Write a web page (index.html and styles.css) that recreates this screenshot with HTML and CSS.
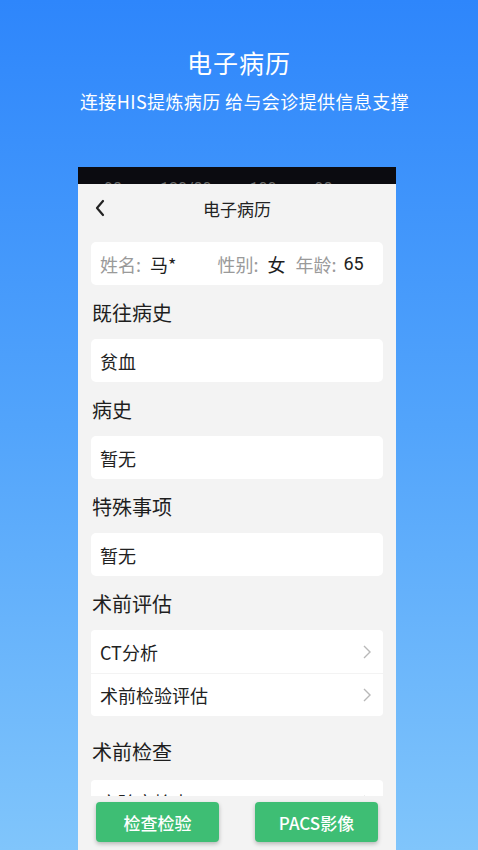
FILE: index.html
```html
<!DOCTYPE html>
<html lang="zh">
<head>
<meta charset="utf-8">
<title>电子病历</title>
<link rel="stylesheet" href="styles.css">
</head>
<body>
<div class="hero">
  <h1 class="hero-title">电子病历</h1>
  <p class="hero-sub">连接HIS提炼病历 给与会诊提供信息支撑</p>
</div>
<div class="phone">
  <div class="statusbar"><span>98</span><span>120/80</span><span>100</span><span>98</span></div>
  <div class="header">
    <svg class="back" width="12" height="18" viewBox="0 0 12 18"><path d="M9 2 L3 9 L9 16" fill="none" stroke="#222" stroke-width="2.2" stroke-linecap="round" stroke-linejoin="round"/></svg>
    <div class="header-title">电子病历</div>
  </div>
  <div class="content">
    <div class="card info">
      <span class="lbl">姓名:</span><span class="val name">马*</span>
      <span class="lbl">性别:</span><span class="val sex">女</span>
      <span class="lbl">年龄:</span><span class="val age">65</span>
    </div>
    <div class="sec">既往病史</div>
    <div class="card">贫血</div>
    <div class="sec">病史</div>
    <div class="card">暂无</div>
    <div class="sec">特殊事项</div>
    <div class="card">暂无</div>
    <div class="sec">术前评估</div>
    <div class="list">
      <div class="row">CT分析<svg class="chev" width="10" height="16" viewBox="0 0 10 16"><path d="M2 2 L8 8 L2 14" fill="none" stroke="#b8b8b8" stroke-width="1.4"/></svg></div>
      <div class="row">术前检验评估<svg class="chev" width="10" height="16" viewBox="0 0 10 16"><path d="M2 2 L8 8 L2 14" fill="none" stroke="#b8b8b8" stroke-width="1.4"/></svg></div>
    </div>
    <div class="sec sec-gap">术前检查</div>
    <div class="list">
      <div class="row">实验室检查<svg class="chev" width="10" height="16" viewBox="0 0 10 16"><path d="M2 2 L8 8 L2 14" fill="none" stroke="#b8b8b8" stroke-width="1.4"/></svg></div>
    </div>
  </div>
  <div class="bottom">
    <button class="btn">检查检验</button>
    <button class="btn">PACS影像</button>
  </div>
</div>
</body>
</html>
```
FILE: styles.css
```css
* { box-sizing: border-box; }
html, body { margin: 0; padding: 0; }
body {
  width: 478px;
  height: 850px;
  overflow: hidden;
  background: linear-gradient(180deg, #2e86fb 0%, #52a4fb 50%, #80c5fb 100%);
  font-family: "Noto Sans CJK SC", "Noto Sans", sans-serif;
  color: #222;
}
.hero { padding-top: 45px; text-align: center; color: #fff; }
.hero-title { margin: 0; font-size: 25px; font-weight: 400; line-height: 34px; letter-spacing: 1px; }
.hero-sub { margin: 8px 0 0; padding-left: 11px; font-size: 18px; line-height: 28px; letter-spacing: 0.4px; }
.phone {
  margin: 52px 0 0 78px;
  width: 318px;
  height: 700px;
  background: #f3f3f3;
  display: flex;
  flex-direction: column;
}
.statusbar {
  height: 17px;
  background: #0b0b10;
  overflow: hidden;
  display: flex;
  gap: 38px;
  padding-left: 26px;
  color: #6a6a6a;
  font-family: "Roboto", sans-serif;
  font-size: 16px;
  line-height: 16px;
  padding-top: 14px;
  flex: none;
}
.header {
  height: 48px;
  flex: none;
  position: relative;
  display: flex;
  align-items: center;
  justify-content: center;
}
.back { position: absolute; left: 16px; top: 15px; }
.header-title { font-size: 17px; color: #222; }
.content {
  height: 564px;
  overflow: hidden;
  padding: 10px 13px 0;
  flex: none;
}
.card {
  background: #fff;
  border-radius: 5px;
  height: 43px;
  display: flex;
  align-items: center;
  padding: 0 9px;
  font-size: 18px;
  color: #222;
}
.info .lbl { color: #9a9a9a; margin-right: 9px; }
.info .val { color: #1e1e1e; }
.info .name { margin-right: 41px; }
.info .sex { margin-right: 10px; }
.info .age { font-family: "Roboto", sans-serif; margin-left: -2px; }
.sec {
  font-size: 20px;
  line-height: 28px;
  padding: 14px 1px 12px;
  color: #1e1e1e;
}
.sec-gap { padding-top: 22px; padding-bottom: 14px; }
.list { background: #fff; border-radius: 4px; }
.row {
  height: 43px;
  display: flex;
  align-items: center;
  justify-content: space-between;
  padding: 0 11px 0 9px;
  font-size: 18px;
  color: #222;
}
.row + .row { border-top: 1px solid #f3f3f3; }
.bottom {
  flex: none;
  display: flex;
  justify-content: space-between;
  padding: 6px 18px 0;
}
.btn {
  width: 123px;
  height: 40px;
  border: none;
  border-radius: 4px;
  background: #3ebe74;
  color: #fff;
  font-family: "Noto Sans CJK SC", sans-serif;
  font-size: 17px;
  font-weight: 500;
  box-shadow: 0 2px 4px rgba(0,0,0,0.25);
}
```
